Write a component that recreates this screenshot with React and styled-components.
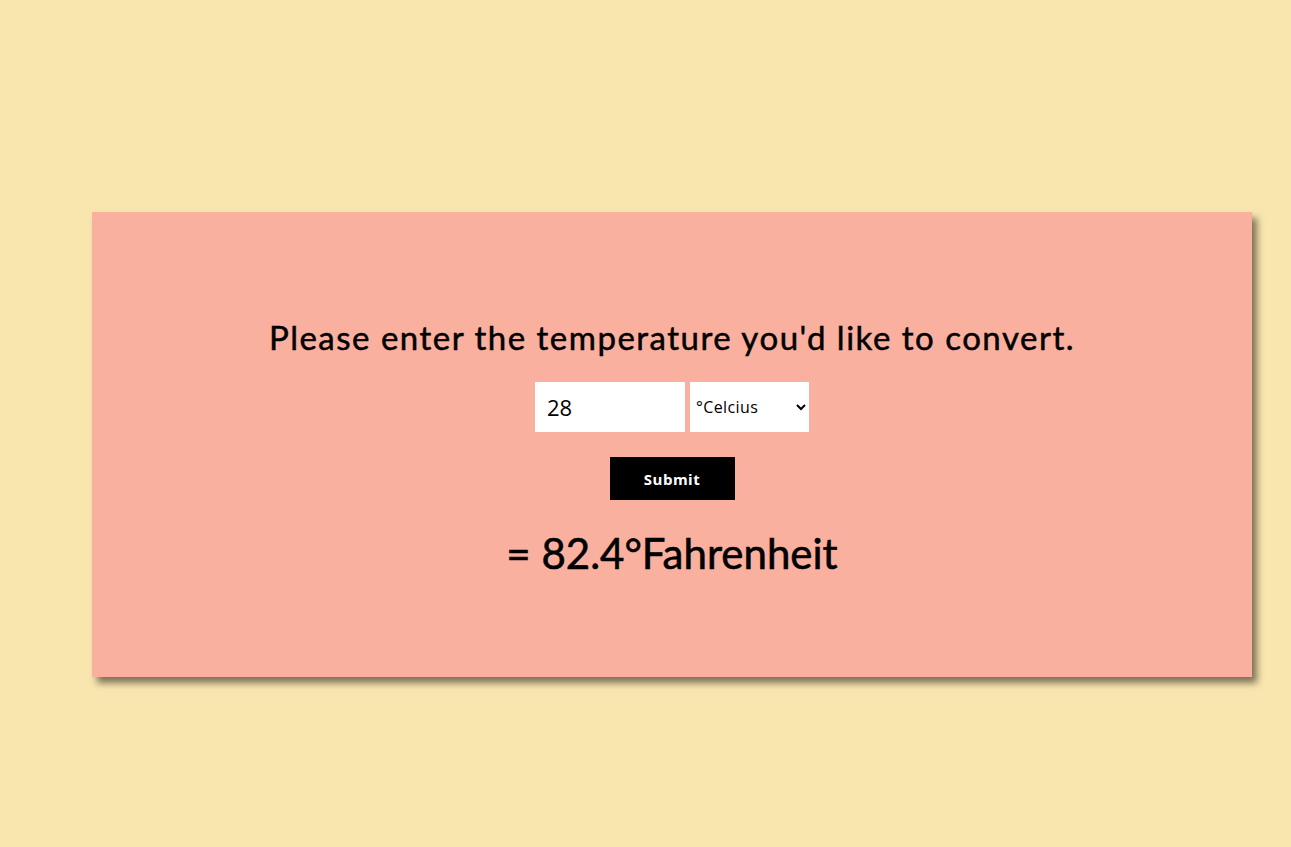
import React, { useState } from "react";
import styled, { createGlobalStyle } from "styled-components";

const GlobalStyle = createGlobalStyle`
	html, body {
		margin: 0;
		padding: 0;
		background-color: #f9e6af;
		font-family: Lato, "Open Sans", sans-serif;
	}
`;

const Page = styled.div`
	min-height: 847px;
	padding: 212px 39px 0 92px;
	box-sizing: border-box;
`;

const Card = styled.div`
	height: 465px;
	box-sizing: border-box;
	padding-top: 105px;
	background-color: #fab09f;
	box-shadow: 5px 6px 7px rgba(0, 0, 0, 0.5);
	display: flex;
	flex-direction: column;
	align-items: center;
`;

const Title = styled.h1`
	margin: 0;
	height: 40px;
	line-height: 40px;
	font-size: 33px;
	font-weight: 400;
	letter-spacing: 1.5px;
	color: #000;
	-webkit-text-stroke: 0.5px #000;
`;

const Row = styled.div`
	display: flex;
	gap: 5px;
	margin-top: 25px;
`;

const NumberInput = styled.input`
	width: 150px;
	height: 50px;
	box-sizing: border-box;
	border: none;
	outline: none;
	padding: 0 12px;
	font-family: "Open Sans", Lato, sans-serif;
	font-size: 22px;
	font-weight: 500;
	color: #000;
	background: #fff;
`;

const UnitSelect = styled.select`
	width: 119px;
	height: 50px;
	box-sizing: border-box;
	border: none;
	outline: none;
	padding: 0 2px;
	font-family: "Open Sans", Lato, sans-serif;
	font-size: 16px;
	letter-spacing: 0.4px;
	color: #000;
	background: #fff;
`;

const SubmitButton = styled.button`
	margin-top: 25px;
	width: 125px;
	height: 43px;
	border: none;
	background: #000;
	color: #fff;
	font-family: "Open Sans", Lato, sans-serif;
	font-size: 15px;
	font-weight: 700;
	letter-spacing: 0.5px;
	cursor: pointer;
`;

const Result = styled.div`
	margin-top: 28px;
	height: 50px;
	line-height: 50px;
	font-size: 42px;
	color: #000;
	-webkit-text-stroke: 0.6px #000;
`;

export default function App() {
	const [value, setValue] = useState("28");
	const [unit, setUnit] = useState("celcius");

	return (
		<>
			<GlobalStyle />
			<Page>
				<Card>
					<Title>Please enter the temperature you'd like to convert.</Title>
					<Row>
						<NumberInput
							type="text"
							value={value}
							onChange={(e) => setValue(e.target.value)}
						/>
						<UnitSelect value={unit} onChange={(e) => setUnit(e.target.value)}>
							<option value="celcius">°Celcius</option>
							<option value="fahrenheit">°Fahrenheit</option>
						</UnitSelect>
					</Row>
					<SubmitButton>Submit</SubmitButton>
					<Result>= 82.4°Fahrenheit</Result>
				</Card>
			</Page>
		</>
	);
}
